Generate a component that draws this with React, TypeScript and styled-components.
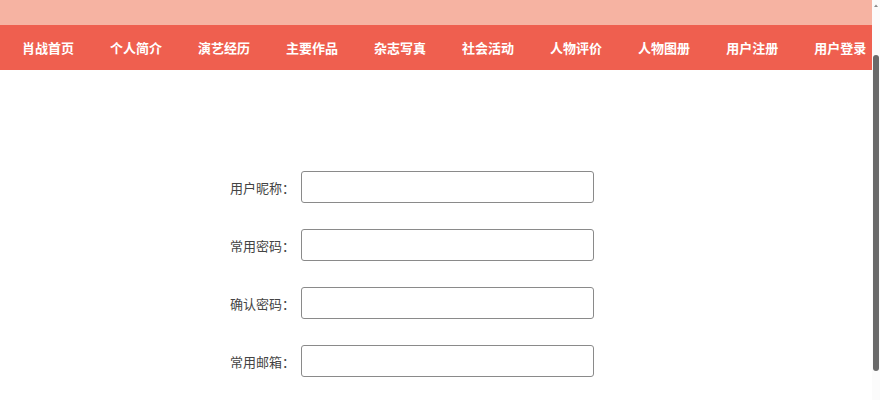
import { useEffect } from 'react'

import styled, { createGlobalStyle } from 'styled-components'

const NAV_ITEMS = ['肖战首页', '个人简介', '演艺经历', '主要作品', '杂志写真', '社会活动', '人物评价', '人物图册', '用户注册', '用户登录']

const FIELDS = [
  { label: '用户昵称', type: 'text' },
  { label: '常用密码', type: 'password' },
  { label: '确认密码', type: 'password' },
  { label: '常用邮箱', type: 'email' },
]

const App = () => {
  // 页面初始滚动位置（顶部横幅被卷起一部分）
  useEffect(() => {
    window.scrollTo(0, 51)
  }, [])

  return (
    <>
      <GlobalStyle />
      <Banner />
      <NavBar>
        {NAV_ITEMS.map((item) => (
          <NavItem key={item} href="#">
            {item}
          </NavItem>
        ))}
      </NavBar>

      <RegisterForm onSubmit={(e) => e.preventDefault()}>
        {FIELDS.map((field) => (
          <FieldRow key={field.label}>
            <FieldLabel>{field.label}：</FieldLabel>
            <FieldInput type={field.type} />
          </FieldRow>
        ))}
      </RegisterForm>

      {/* 右侧滚动条（截图环境隐藏了原生滚动条） */}
      <ScrollRail aria-hidden>
        <ScrollArrow viewBox="0 0 8 6">
          <path d="M4 1.5 L6 4 L2 4 Z" fill="#8a8a8a" />
        </ScrollArrow>
        <ScrollThumb />
      </ScrollRail>
    </>
  )
}

export default App

const GlobalStyle = createGlobalStyle`
  html, body {
    margin: 0;
    padding: 0;
    background: #ffffff;
    font-family: "Noto Sans CJK SC", "Noto Sans", sans-serif;
  }

  ::-webkit-scrollbar {
    display: none;
  }
`

const Banner = styled.div`
  height: 76px;
  background: #f6b3a2;
`

const NavBar = styled.nav`
  display: flex;
  align-items: center;
  height: 45px;
  padding-left: 4px;
  background: #ef5f4f;
  overflow: hidden;
`

const NavItem = styled.a`
  flex-shrink: 0;
  padding: 0 18px;
  line-height: 45px;
  color: #ffffff;
  font-size: 13px;
  font-weight: bold;
  text-decoration: none;
  white-space: nowrap;
`

const RegisterForm = styled.form`
  display: flex;
  flex-direction: column;
  gap: 26px;
  padding: 101px 0 40px 230px;
`

const FieldRow = styled.div`
  display: flex;
  align-items: center;
  gap: 6px;
`

const FieldLabel = styled.label`
  width: 65px;
  color: #444444;
  font-size: 13px;
  white-space: nowrap;
`

const FieldInput = styled.input`
  box-sizing: border-box;
  width: 293px;
  height: 32px;
  padding: 0 8px;
  border: 1px solid #8a8a8a;
  border-radius: 3px;
  background: #ffffff;
  font-size: 13px;
  outline: none;
`

const ScrollRail = styled.div`
  position: fixed;
  top: 0;
  right: 0;
  bottom: 0;
  width: 8px;
  background: #fbfbfb;
`

const ScrollArrow = styled.svg`
  display: block;
  width: 8px;
  height: 10px;
  margin-top: 1px;
`

const ScrollThumb = styled.div`
  box-sizing: border-box;
  width: 6px;
  height: 316px;
  margin: 44px 0 0 1px;
  border-radius: 3px;
  background: #6a6a6a;
`
